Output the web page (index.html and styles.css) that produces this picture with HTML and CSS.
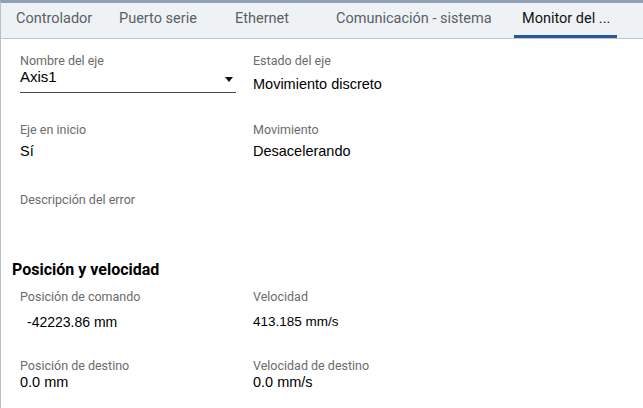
FILE: index.html
```html
<!DOCTYPE html>
<html lang="es">
<head>
    <meta charset="UTF-8">
    <meta name="viewport" content="width=device-width, initial-scale=1.0">
    <title>Monitor del eje</title>
    <link rel="stylesheet" href="styles.css">
</head>
<body>

    <div class="panel">
        <div class="tabs">
            <div class="tab">Controlador</div>
            <div class="tab">Puerto serie</div>
            <div class="tab">Ethernet</div>
            <div class="tab">Comunicación - sistema</div>
            <div class="tab active">Monitor del ...</div>
        </div>

        <div class="content">
            <div class="row row-first">
                <div class="field">
                    <span class="label">Nombre del eje</span>
                    <div class="select">
                        <span class="value">Axis1</span>
                        <span class="caret"></span>
                    </div>
                </div>
                <div class="field">
                    <span class="label">Estado del eje</span>
                    <span class="value low">Movimiento discreto</span>
                </div>
            </div>

            <div class="row row-second">
                <div class="field">
                    <span class="label">Eje en inicio</span>
                    <span class="value spaced">Sí</span>
                </div>
                <div class="field">
                    <span class="label">Movimiento</span>
                    <span class="value spaced">Desacelerando</span>
                </div>
            </div>

            <div class="row row-third">
                <div class="field">
                    <span class="label">Descripción del error</span>
                </div>
            </div>

            <h2>Posición y velocidad</h2>

            <div class="row row-pos">
                <div class="field">
                    <span class="label">Posición de comando</span>
                    <span class="value wide indent">-42223.86 mm</span>
                </div>
                <div class="field">
                    <span class="label">Velocidad</span>
                    <span class="value wide small">413.185 mm/s</span>
                </div>
            </div>

            <div class="row row-dest">
                <div class="field">
                    <span class="label">Posición de destino</span>
                    <span class="value">0.0 mm</span>
                </div>
                <div class="field">
                    <span class="label">Velocidad de destino</span>
                    <span class="value">0.0 mm/s</span>
                </div>
            </div>
        </div>
    </div>

</body>
</html>
```

FILE: styles.css
```css
body {
    margin: 0;
    background-color: #fff;
    font-family: Roboto, "Liberation Sans", sans-serif;
}

.panel {
    height: 405px;
    border-top: 3px solid #8fa2b5;
    border-left: 1px solid #b8c0c8;
}

.tabs {
    display: grid;
    grid-template-columns: 103px 116px 101px 186px 103px;
    height: 35px;
    padding-left: 7px;
    background-color: #eff2f5;
    border-bottom: 1px solid #c3c6c9;
}

.tab {
    padding: 0 8px;
    line-height: 32px;
    font-size: 14.5px;
    color: #5a5f66;
    white-space: nowrap;
    border-bottom: 3px solid transparent;
}

.tab.active {
    color: #111;
    border-bottom-color: #24589a;
}

.content {
    padding-left: 19px;
}

.row {
    display: grid;
    grid-template-columns: 216px 216px;
    column-gap: 17px;
}

.row-first {
    margin-top: 15px;
}

.row-second {
    margin-top: 30px;
}

.row-third {
    margin-top: 33px;
}

.row-pos {
    margin-top: 10px;
}

.row-dest {
    margin-top: 28px;
}

.field {
    display: flex;
    flex-direction: column;
}

.label {
    font-size: 12.5px;
    line-height: 14px;
    color: #6b6b6b;
}

.value {
    font-family: "Liberation Sans", Arial, sans-serif;
    font-size: 14.5px;
    line-height: 18px;
    color: #000;
}

.select .value {
    font-size: 15px;
}

.value.low {
    margin-top: 7px;
}

.value.spaced {
    margin-top: 5px;
}

.value.wide {
    margin-top: 9px;
    font-size: 14px;
}

.value.indent {
    padding-left: 7px;
}

.value.small {
    font-size: 13.5px;
}

.select {
    display: flex;
    justify-content: space-between;
    align-items: center;
    padding-bottom: 6px;
    border-bottom: 1px solid #4a4a4a;
}

.caret {
    width: 0;
    height: 0;
    margin-right: 3px;
    margin-top: 4px;
    border-left: 4px solid transparent;
    border-right: 4px solid transparent;
    border-top: 5px solid #111;
}

h2 {
    margin: 53px 0 0 -8px;
    font-size: 16px;
    line-height: 20px;
    font-weight: bold;
    color: #000;
}
```
